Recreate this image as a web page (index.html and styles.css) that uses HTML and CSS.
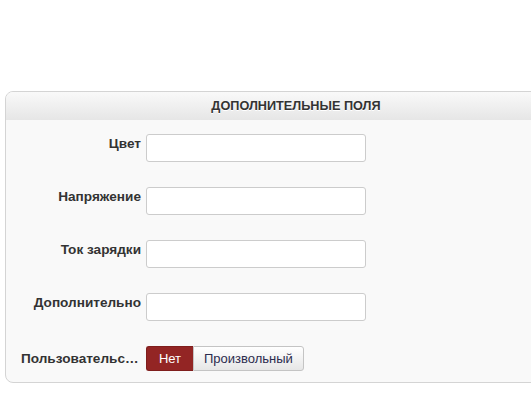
FILE: index.html
```html
<!DOCTYPE html>
<html lang="ru">
<head>
  <meta charset="UTF-8" />
  <title>Дополнительные поля</title>
  <link rel="stylesheet" href="styles.css">
</head>
<body>
  <div class="panel">
    <div class="panel-head">ДОПОЛНИТЕЛЬНЫЕ ПОЛЯ</div>
    <div class="panel-body">
      <div class="row">
        <label class="label">Цвет</label>
        <input class="field" type="text" />
      </div>
      <div class="row">
        <label class="label">Напряжение</label>
        <input class="field" type="text" />
      </div>
      <div class="row">
        <label class="label">Ток зарядки</label>
        <input class="field" type="text" />
      </div>
      <div class="row">
        <label class="label">Дополнительно</label>
        <input class="field" type="text" />
      </div>
      <div class="row row-last">
        <label class="label">Пользовательский</label>
        <div class="switch">
          <button class="opt active">Нет</button>
          <button class="opt">Произвольный</button>
        </div>
      </div>
    </div>
  </div>
</body>
</html>
```

FILE: styles.css
```css
body {
  margin: 0;
  background: #fff;
  font-family: "Liberation Sans", Arial, sans-serif;
  font-size: 13px;
  color: #333;
}
.panel {
  margin: 91px 0 0 5px;
  width: 580px;
  border: 1px solid #d4d4d4;
  border-radius: 8px;
  background: #f9f9f9;
}
.panel-head {
  height: 28px;
  line-height: 28px;
  text-align: center;
  font-size: 12.7px;
  font-weight: bold;
  color: #333;
  text-shadow: 0 1px 0 #fff;
  background: linear-gradient(#f9f9f9, #e6e6e6);
  border-radius: 7px 7px 0 0;
}
.panel-body {
  padding: 14px 0 11px 0;
}
.row {
  display: flex;
  align-items: flex-start;
  margin-bottom: 25px;
}
.row-last {
  margin-bottom: 0;
  align-items: center;
}
.label {
  width: 120px;
  padding: 2px 5px 0 15px;
  text-align: right;
  font-size: 13.6px;
  font-weight: bold;
  white-space: nowrap;
  overflow: hidden;
  text-overflow: ellipsis;
}
.row-last .label {
  padding-top: 0;
}
.field {
  width: 220px;
  height: 28px;
  box-sizing: border-box;
  border: 1px solid #ccc;
  border-radius: 3px;
  background: #fff;
  margin: 0;
}
.switch {
  display: flex;
  height: 25px;
}
.opt {
  margin: 0;
  font-family: inherit;
  font-size: 13px;
  padding: 0 10px;
  border: 1px solid #c4c4c4;
  background: linear-gradient(#fff, #e6e6e6);
  color: #2c2c4e;
  border-radius: 0 3px 3px 0;
}
.opt.active {
  width: 47px;
  padding: 0;
  background: #932524;
  border-color: #7f1e1d;
  color: #fff;
  border-radius: 3px 0 0 3px;
  border-right: none;
}
```
